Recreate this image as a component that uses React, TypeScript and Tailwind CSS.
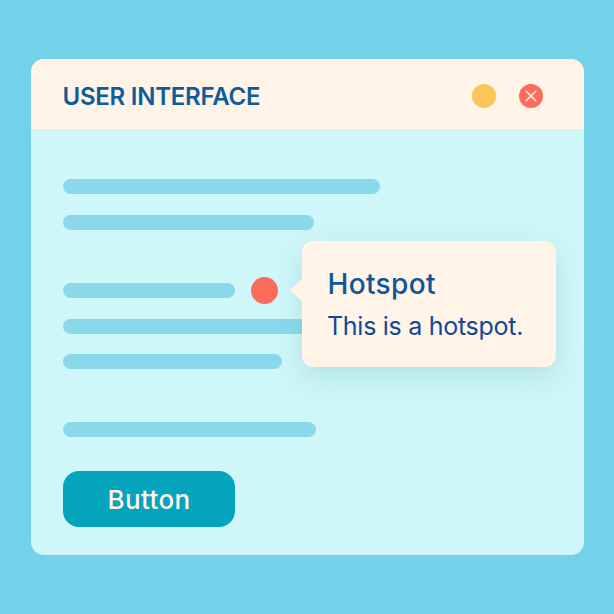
import React from "react";

function Bar({ className }: { className: string }) {
  return <div className={`h-[15px] rounded-full bg-[#89d9ea] ${className}`} />;
}

function TitleBar() {
  return (
    <header className="flex h-[70px] items-center justify-between bg-[#fff4e7] pl-8 pr-[41px]">
      <h1 className="whitespace-nowrap pt-[5px] text-[24px] leading-none font-semibold tracking-[-0.24px] text-[#0d5c9c]">
        USER INTERFACE
      </h1>
      <div className="flex items-center gap-[23px] pt-[3px]">
        <span className="size-6 rounded-full bg-[#fac659]" />
        <button aria-label="Close" className="flex size-6 items-center justify-center rounded-full bg-[#fb6c5d]">
          <svg viewBox="0 0 12 12" className="size-3" fill="none" stroke="#fff4e7" strokeWidth="1.5" strokeLinecap="round">
            <path d="M1.2 1.2 10.8 10.8M10.8 1.2 1.2 10.8" />
          </svg>
        </button>
      </div>
    </header>
  );
}

function Tooltip() {
  return (
    <div className="absolute left-[51px] top-[-36px] z-10 h-[126px] w-[254px] rounded-[11px] bg-[#fff4e7] pl-[26px] pt-[27px] shadow-[0_10px_28px_rgba(60,150,160,0.2)]">
      <svg viewBox="0 0 13 24" className="absolute -left-3 top-[37px] h-6 w-[13px]">
        <path d="M13 0 12 1 .8 11.2Q0 12 .8 12.8L12 23 13 24Z" fill="#fff4e7" />
      </svg>
      <h2 className="whitespace-nowrap text-[28px] leading-8 font-medium tracking-[0.35px] text-[#0d5699]">Hotspot</h2>
      <p className="ml-[-0.5px] mt-[10px] whitespace-nowrap text-[25px] leading-8 tracking-[-0.28px] text-[#104896]">This is a hotspot.</p>
    </div>
  );
}

export default function App() {
  return (
    <div className="h-[614px] w-[614px] overflow-hidden bg-[#73d2e9] pl-[30.5px] pt-[59px] font-['Inter','Liberation_Sans',sans-serif]">
      <main className="h-[496px] w-[553px] overflow-hidden rounded-[13px] bg-[#cff6f8]">
        <TitleBar />
        <section className="flex flex-col items-start px-8 pt-[50px]">
          <Bar className="w-[317px]" />
          <Bar className="mt-[20.5px] w-[251px]" />
          <div className="mt-[47.5px] flex h-[27px] items-center">
            <Bar className="w-[172px]" />
            <div className="relative ml-4 size-[27px] rounded-full bg-[#fb6c5d]">
              <Tooltip />
            </div>
          </div>
          <Bar className="mt-[14.5px] w-[260px]" />
          <Bar className="mt-[20.5px] w-[219px]" />
          <Bar className="mt-[53px] w-[253px]" />
          <button className="mt-[34px] flex h-14 w-[172px] items-center justify-center rounded-[16px] bg-[#04a4bd] pl-px pt-0.5 text-[26px] leading-none font-medium tracking-[0.4px] text-[#fff4e7]">
            Button
          </button>
        </section>
      </main>
    </div>
  );
}
